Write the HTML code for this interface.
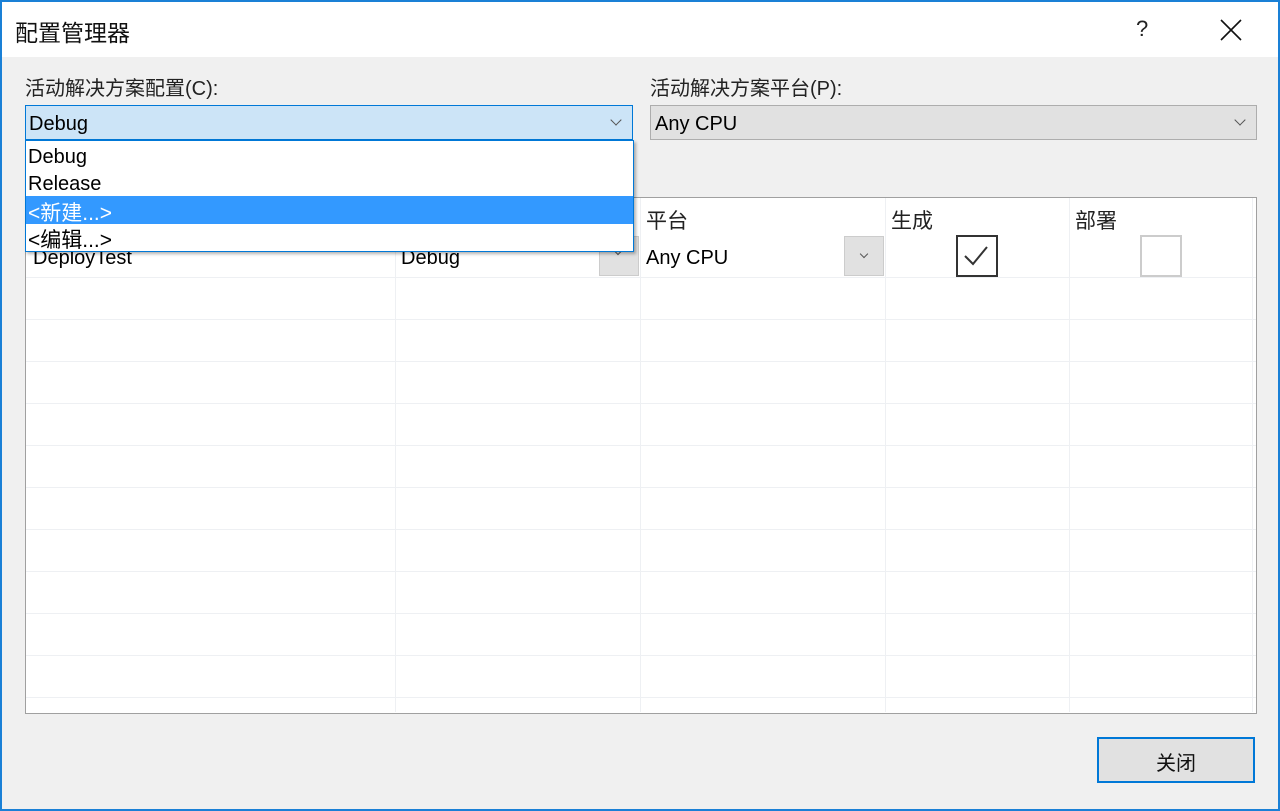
<!DOCTYPE html>
<html><head><meta charset="utf-8"><style>
*{margin:0;padding:0;box-sizing:border-box}
body{width:1280px;height:811px;overflow:hidden;background:#1a80d6;font-family:"Liberation Sans","Noto Sans CJK SC",sans-serif;color:#000;position:relative}
.a{position:absolute}
.win{left:2px;top:2px;width:1276px;height:807px;background:#f0f0f0}
.title{left:0;top:0;width:1276px;height:55px;background:#fff}
.t{font-size:20px;white-space:nowrap}
.chev{position:absolute;width:8px;height:8px;border-right:1px solid #555;border-bottom:1px solid #555;transform:rotate(45deg)}
.vl{position:absolute;top:0;width:1px;height:514px;background:#eef0f3}
.hl{position:absolute;left:0;width:1230px;height:1px;background:#eef0f3}
</style></head><body>
<div class="a win">
<div class="a title"></div>
</div>
<div class="a t" style="left:15px;top:14px;font-size:23px;color:#111">配置管理器</div>
<div class="a t" style="left:1136px;top:16px;font-size:22px;color:#222">?</div>
<svg class="a" style="left:1220px;top:19px" width="22" height="22"><path d="M1 1L21 21M21 1L1 21" stroke="#111" stroke-width="1.6"/></svg>

<div class="a t" style="left:25px;top:72px;font-size:20px;color:#222">活动解决方案配置(C):</div>
<div class="a t" style="left:650px;top:72px;font-size:20px;color:#222">活动解决方案平台(P):</div>

<div class="a" style="left:650px;top:105px;width:607px;height:35px;background:#e1e1e1;border:1px solid #adadad"></div>
<div class="a t" style="left:655px;top:113px">Any CPU</div>
<div class="chev" style="left:1236px;top:116px"></div>

<!-- grid -->
<div class="a" style="left:25px;top:197px;width:1232px;height:517px;background:#fff;border:1px solid #a0a0a0;overflow:hidden">
  <div class="vl" style="left:369px"></div>
  <div class="vl" style="left:614px"></div>
  <div class="vl" style="left:859px"></div>
  <div class="vl" style="left:1043px"></div>
  <div class="vl" style="left:1226px"></div>
  <div class="hl" style="top:79px"></div>
  <div class="hl" style="top:121px"></div>
  <div class="hl" style="top:163px"></div>
  <div class="hl" style="top:205px"></div>
  <div class="hl" style="top:247px"></div>
  <div class="hl" style="top:289px"></div>
  <div class="hl" style="top:331px"></div>
  <div class="hl" style="top:373px"></div>
  <div class="hl" style="top:415px"></div>
  <div class="hl" style="top:457px"></div>
  <div class="hl" style="top:499px"></div>
</div>
<div class="a t" style="left:33px;top:247px">DeployTest</div>
<div class="a t" style="left:401px;top:247px">Debug</div>
<div class="a" style="left:599px;top:236px;width:40px;height:40px;background:#e1e1e1;border:1px solid #ccc"></div>
<div class="chev" style="left:615px;top:248px;width:6px;height:6px"></div>
<div class="a t" style="left:646px;top:205px;font-size:21px;color:#222">平台</div>
<div class="a t" style="left:646px;top:247px">Any CPU</div>
<div class="a" style="left:844px;top:236px;width:40px;height:40px;background:#e1e1e1;border:1px solid #ccc"></div>
<div class="chev" style="left:861px;top:251px;width:6px;height:6px"></div>
<div class="a t" style="left:891px;top:205px;font-size:21px;color:#222">生成</div>
<div class="a" style="left:956px;top:235px;width:42px;height:42px;border:2px solid #333;background:#fff"></div>
<svg class="a" style="left:956px;top:235px" width="42" height="42"><path d="M9 21L17 29L31 12" stroke="#333" stroke-width="2" fill="none"/></svg>
<div class="a t" style="left:1075px;top:205px;font-size:21px;color:#222">部署</div>
<div class="a" style="left:1140px;top:235px;width:42px;height:42px;border:2px solid #ccc;background:#fff"></div>

<!-- combo -->
<div class="a" style="left:25px;top:105px;width:608px;height:35px;background:#cce4f7;border:1px solid #0078d7"></div>
<div class="a t" style="left:29px;top:113px">Debug</div>
<div class="chev" style="left:612px;top:116px"></div>
<div class="a" style="left:25px;top:140px;width:609px;height:112px;background:#fff;border:1px solid #0078d7;box-shadow:2px 2px 3px rgba(0,0,0,.3)">
  <div class="a" style="left:0;top:55px;width:607px;height:28px;background:#3399ff"></div>
</div>
<div class="a t" style="left:28px;top:146px">Debug</div>
<div class="a t" style="left:28px;top:173px">Release</div>
<div class="a t" style="left:28px;top:197px;color:#fff;font-size:21px">&lt;新建...&gt;</div>
<div class="a t" style="left:28px;top:224px;font-size:21px">&lt;编辑...&gt;</div>

<!-- button -->
<div class="a" style="left:1097px;top:737px;width:158px;height:46px;background:#e1e1e1;border:2px solid #0078d7"></div>
<div class="a t" style="left:1156px;top:747px;font-size:20px;color:#111">关闭</div>
</body></html>
